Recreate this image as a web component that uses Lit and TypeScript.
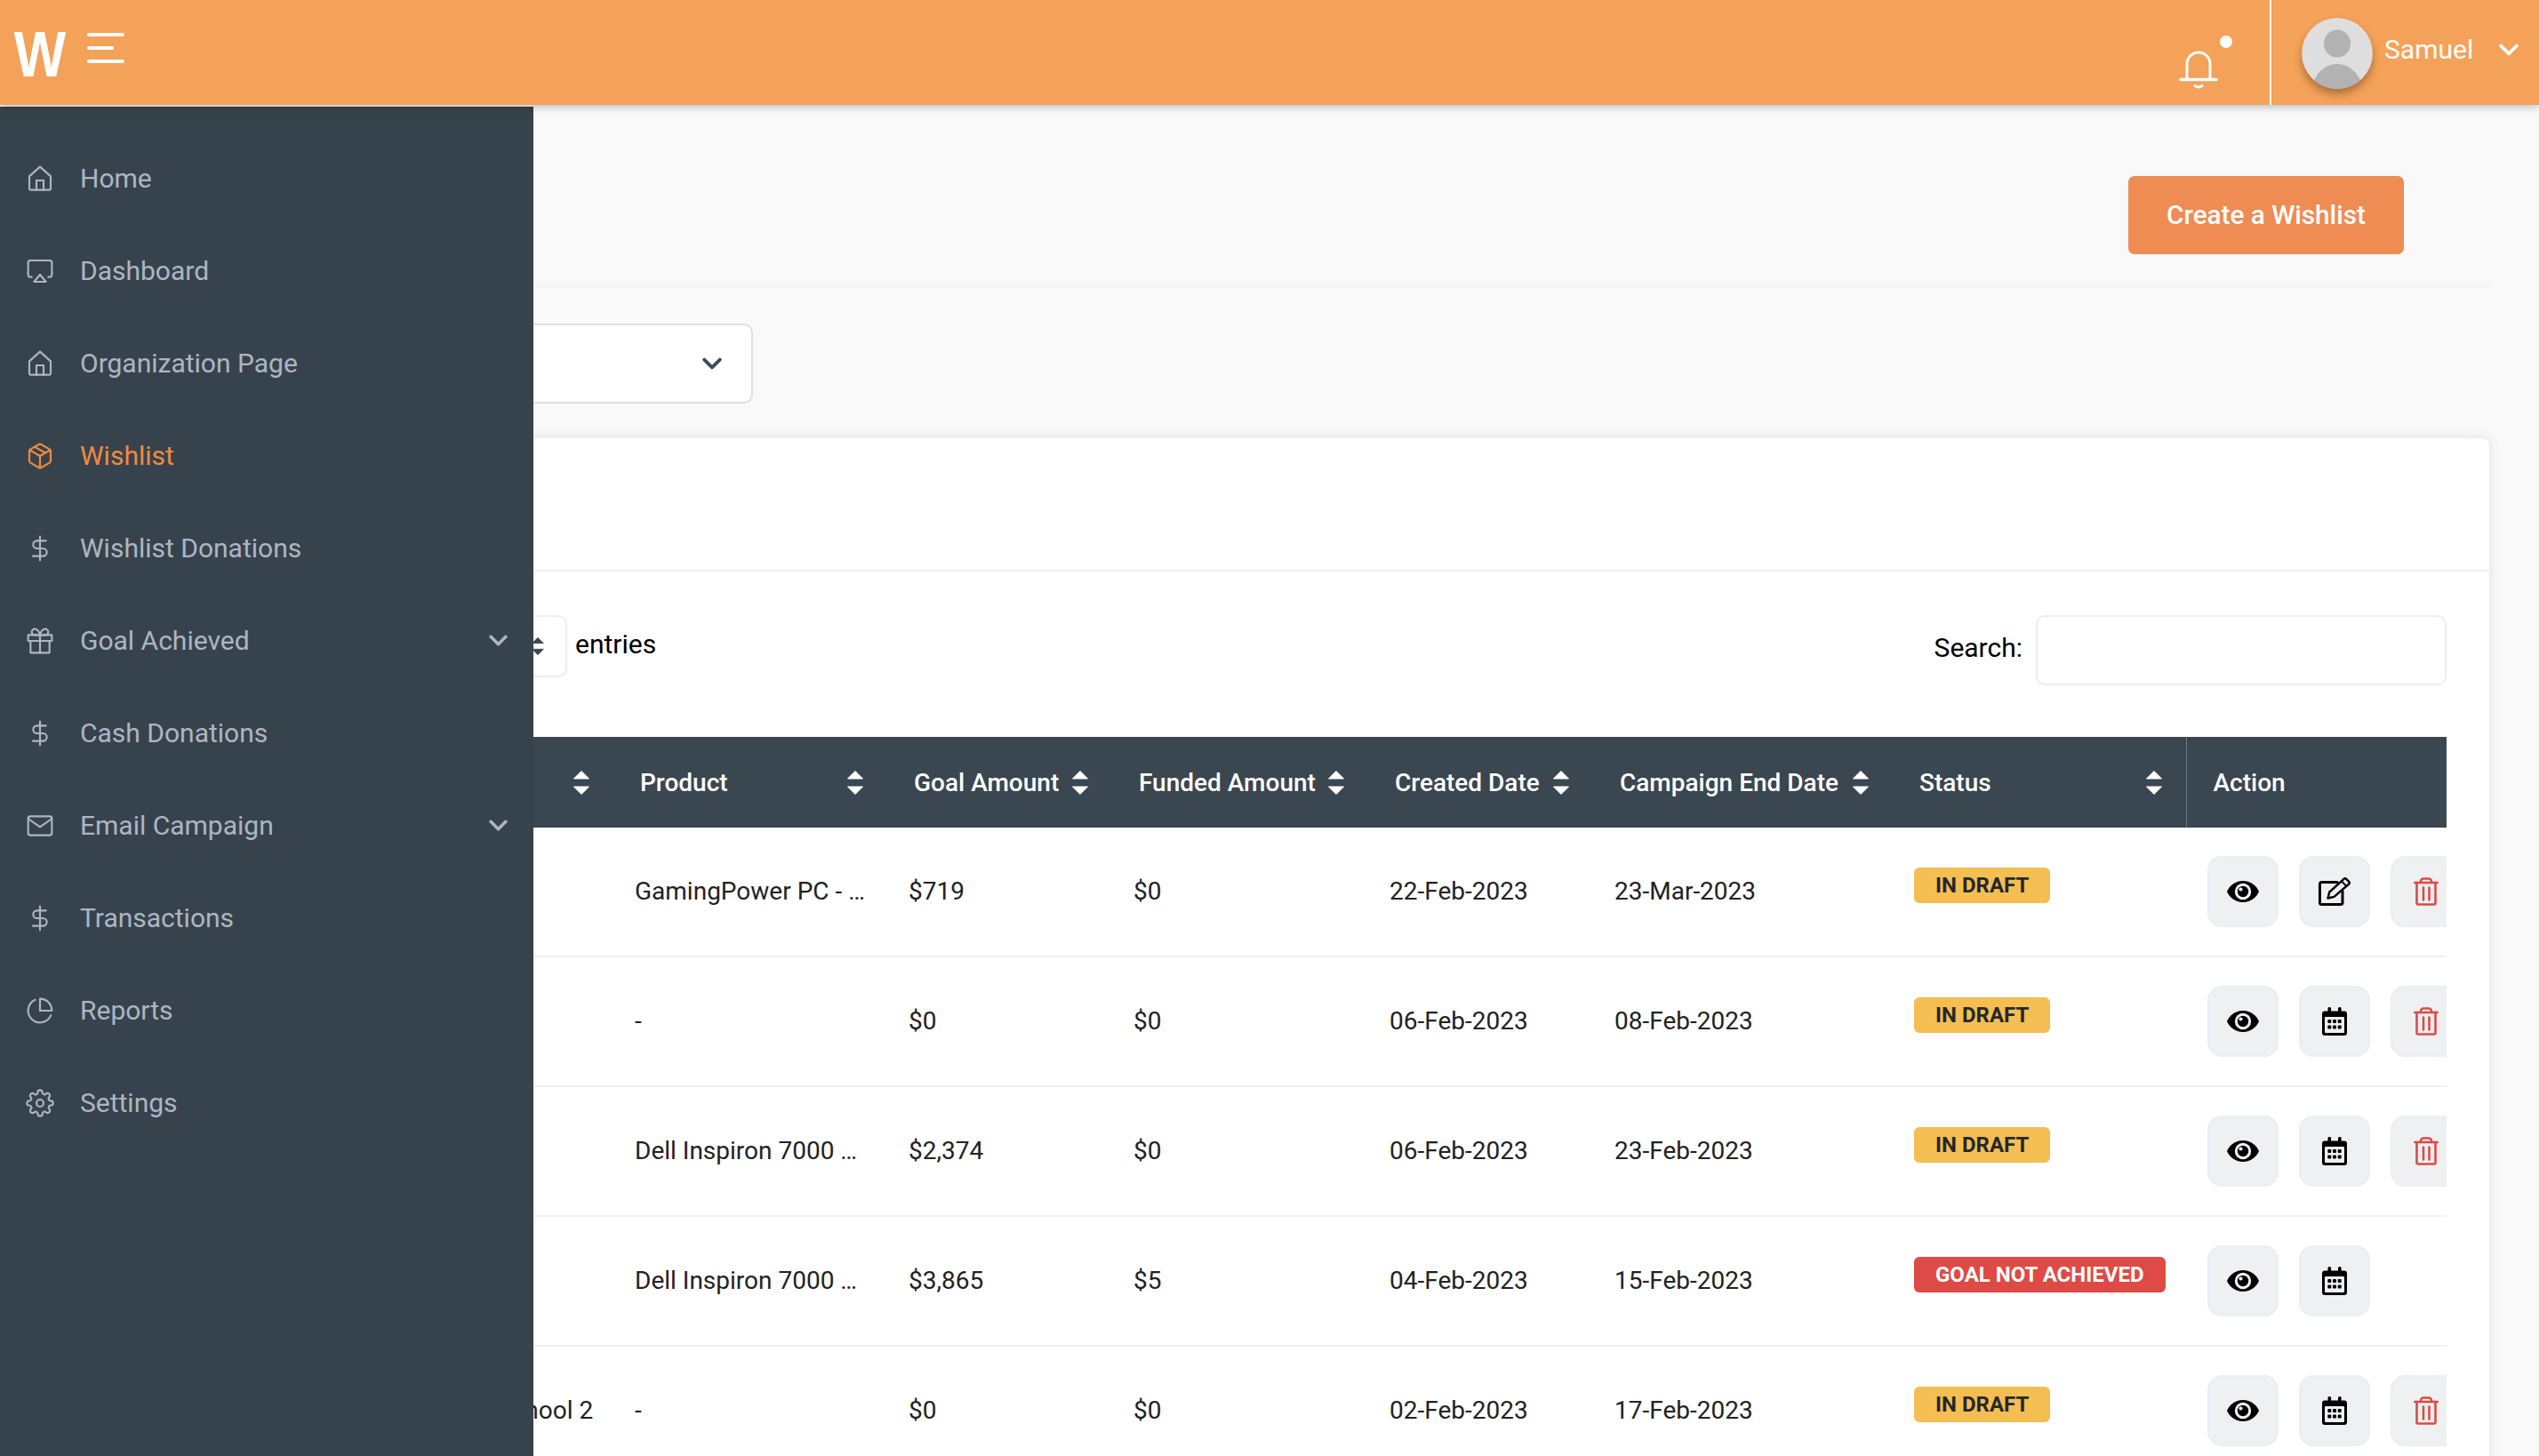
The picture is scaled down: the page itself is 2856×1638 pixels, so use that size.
import { LitElement, html, css, svg } from "lit";
import { customElement } from "lit/decorators.js";

const fi = (body: unknown) => html`<svg class="nav-ic" viewBox="0 0 24 24" fill="none" stroke="currentColor" stroke-width="1.6" stroke-linecap="round" stroke-linejoin="round">${body}</svg>`;
const icons: Record<string, unknown> = {
  home: fi(svg`<path d="M3 10 12 2l9 8v10.500a1 1 0 0 1-1 1H4a1 1 0 0 1-1-1z"/><path d="M9 21.500v-8h6v8"/>`),
  airplay: fi(svg`<path d="M5 17H4a2 2 0 0 1-2-2V5a2 2 0 0 1 2-2h16a2 2 0 0 1 2 2v10a2 2 0 0 1-2 2h-1"/><polygon points="12 15 17 21 7 21 12 15"/>`),
  box: fi(svg`<path d="M7.5 4.21 16.5 9.4"/><path d="M21 16V8a2 2 0 0 0-1-1.73l-7-4a2 2 0 0 0-2 0l-7 4A2 2 0 0 0 3 8v8a2 2 0 0 0 1 1.73l7 4a2 2 0 0 0 2 0l7-4A2 2 0 0 0 21 16z"/><polyline points="3.27 6.96 12 12.01 20.73 6.96"/><line x1="12" y1="22.08" x2="12" y2="12"/>`),
  dollar: fi(svg`<line x1="12" y1="2" x2="12" y2="22"/><path d="M17 5.500H9.500a3.250 3.250 0 0 0 0 6.500h5a3.250 3.250 0 0 1 0 6.500H6"/>`),
  gift: fi(svg`<polyline points="20 12 20 22 4 22 4 12"/><rect x="2" y="7" width="20" height="5"/><line x1="12" y1="22" x2="12" y2="7"/><path d="M12 7H7.5a2.5 2.5 0 0 1 0-5C11 2 12 7 12 7z"/><path d="M12 7h4.5a2.5 2.5 0 0 0 0-5C13 2 12 7 12 7z"/>`),
  mail: fi(svg`<path d="M4 4h16c1.1 0 2 .9 2 2v12c0 1.1-.9 2-2 2H4c-1.1 0-2-.9-2-2V6c0-1.1.9-2 2-2z"/><polyline points="22 6 12 13 2 6"/>`),
  pie: fi(svg`<path d="M21.21 15.89A10 10 0 1 1 8 2.83"/><path d="M22 12A10 10 0 0 0 12 2v10z"/>`),
  gear: fi(svg`<circle cx="12" cy="12" r="3"/><path d="M19.4 15a1.65 1.65 0 0 0 .33 1.82l.06.06a2 2 0 0 1 0 2.83 2 2 0 0 1-2.83 0l-.06-.06a1.65 1.65 0 0 0-1.82-.33 1.65 1.65 0 0 0-1 1.51V21a2 2 0 0 1-2 2 2 2 0 0 1-2-2v-.09A1.65 1.65 0 0 0 9 19.4a1.65 1.65 0 0 0-1.82.33l-.06.06a2 2 0 0 1-2.83 0 2 2 0 0 1 0-2.83l.06-.06a1.65 1.65 0 0 0 .33-1.82 1.65 1.65 0 0 0-1.51-1H3a2 2 0 0 1-2-2 2 2 0 0 1 2-2h.09A1.65 1.65 0 0 0 4.6 9a1.65 1.65 0 0 0-.33-1.82l-.06-.06a2 2 0 0 1 0-2.83 2 2 0 0 1 2.83 0l.06.06a1.65 1.65 0 0 0 1.82.33H9a1.65 1.65 0 0 0 1-1.51V3a2 2 0 0 1 2-2 2 2 0 0 1 2 2v.09a1.65 1.65 0 0 0 1 1.51 1.65 1.65 0 0 0 1.82-.33l.06-.06a2 2 0 0 1 2.83 0 2 2 0 0 1 0 2.83l-.06.06a1.65 1.65 0 0 0-.33 1.82V9a1.65 1.65 0 0 0 1.51 1H21a2 2 0 0 1 2 2 2 2 0 0 1-2 2h-.09a1.65 1.65 0 0 0-1.51 1z"/>`),
};

const nav = [
  ["home", "Home"], ["airplay", "Dashboard"], ["home", "Organization Page"], ["box", "Wishlist", "active"],
  ["dollar", "Wishlist Donations"], ["gift", "Goal Achieved", "sub"], ["dollar", "Cash Donations"],
  ["mail", "Email Campaign", "sub"], ["dollar", "Transactions"], ["pie", "Reports"], ["gear", "Settings"],
];

const chevron = (cls: string) => html`<svg class=${cls} viewBox="0 0 20 12" fill="none" stroke="currentColor" stroke-width="3.400" stroke-linecap="round" stroke-linejoin="round"><polyline points="2 2 10 10 18 2"/></svg>`;
const sort = html`<svg class="sort" viewBox="0 0 18 27"><path d="M9 0.5 17.5 9H0.5z M9 26.5 17.5 18H0.5z" fill="currentColor" stroke="currentColor" stroke-width="1" stroke-linejoin="round"/></svg>`;

const eye = html`<svg class="a-eye" viewBox="0 0 36 24"><path d="M18 0C9 0 2.500 6 0 12c2.500 6 9 12 18 12s15.500-6 18-12C33.500 6 27 0 18 0z" fill="#000"/><circle cx="18" cy="12" r="9.200" fill="#eff0f1"/><circle cx="18" cy="12" r="6.200" fill="#000"/><circle cx="15.500" cy="9.500" r="2.100" fill="#eff0f1"/></svg>`;
const edit = html`<svg class="a-edit" viewBox="0 0 36 32" fill="none" stroke="#000" stroke-width="3" stroke-linejoin="round"><path d="M21 5.500H3.500a2 2 0 0 0-2 2v21a2 2 0 0 0 2 2H25a2 2 0 0 0 2-2V15.500" stroke-linecap="round"/><path d="M10.500 23.500l1.800-7L28.500 1.800a2 2 0 0 1 2.700 0l3 3a2 2 0 0 1 0 2.700L17.500 21.800z" stroke-width="2.400"/><path d="M26 4.500l5.500 5.500" stroke-width="2"/></svg>`;
const cal = html`<svg class="a-cal" viewBox="0 0 28 32"><rect x="6.500" y="0" width="3.600" height="7" rx="1.500" fill="#000"/><rect x="18" y="0" width="3.600" height="7" rx="1.500" fill="#000"/><path d="M3 4.500h22a3 3 0 0 1 3 3V29a3 3 0 0 1-3 3H3a3 3 0 0 1-3-3V7.500a3 3 0 0 1 3-3z" fill="#000"/><rect x="3" y="11" width="22" height="18" rx="1" fill="#eff0f1"/><g fill="#000"><rect x="6.300" y="14" width="4" height="4" rx="1"/><rect x="12" y="14" width="4" height="4" rx="1"/><rect x="17.700" y="14" width="4" height="4" rx="1"/><rect x="6.300" y="20.500" width="4" height="4" rx="1"/><rect x="12" y="20.500" width="4" height="4" rx="1"/><rect x="17.700" y="20.500" width="4" height="4" rx="1"/></g></svg>`;
const trash = html`<svg class="a-trash" viewBox="0 0 28 32" fill="none" stroke="#dd4a45" stroke-width="2.600" stroke-linecap="round" stroke-linejoin="round"><path d="M1.300 6h25.400"/><path d="M8 6V4.500A3 3 0 0 1 11 1.500h6a3 3 0 0 1 3 3V6"/><path d="M3.500 6v23a1.500 1.500 0 0 0 1.500 1.500h18a1.500 1.500 0 0 0 1.500-1.500V6"/><path d="M11 11.500v14M17.500 11.500v14"/></svg>`;

const rows: [string, string, string, string, string, string, string, any, boolean][] = [
  ["", "GamingPower PC - …", "$719", "$0", "22-Feb-2023", "23-Mar-2023", "d", edit, true],
  ["", "-", "$0", "$0", "06-Feb-2023", "08-Feb-2023", "d", cal, true],
  ["", "Dell Inspiron 7000 …", "$2,374", "$0", "06-Feb-2023", "23-Feb-2023", "d", cal, true],
  ["", "Dell Inspiron 7000 …", "$3,865", "$5", "04-Feb-2023", "15-Feb-2023", "n", cal, false],
  ["School 2", "-", "$0", "$0", "02-Feb-2023", "17-Feb-2023", "d", cal, true],
];

@customElement("app-root")
export class AppRoot extends LitElement {
  static styles = css`
    :host { display: block; position: relative; width: 2856px; height: 1638px; overflow: hidden; background: #f9f9f9; font-family: Roboto, "Liberation Sans", sans-serif; color: #222; }
    .top { height: 118px; background: #f4a259; box-shadow: 0 3px 8px rgba(0,0,0,.22); display: flex; align-items: stretch; position: relative; z-index: 3; color: #fff; }
    .logo { font-family: "Liberation Sans", sans-serif; font-weight: 700; font-size: 72px; line-height: 50px; width: 58px; margin: 36px 0 0 16px; height: 50px; display: flex; justify-content: center; transform: scaleX(.86); }
    .burger { margin: 37px 0 0 24px; width: 42px; display: flex; flex-direction: column; gap: 11px; }
    .burger i { display: block; height: 4px; background: #fff; border-radius: 2px; }
    .burger i:nth-child(2) { width: 30px; }
    .spacer { flex: 1; }
    .bell-wrap { position: relative; width: 44px; margin: 56px 58px 0 0; }
    .bell { display: block; width: 44px; height: 44px; }
    .dot { position: absolute; width: 14px; height: 14px; border-radius: 50%; background: #fff; left: 46px; top: -16px; }
    .user { border-left: 2px solid #fff; display: flex; align-items: center; padding-left: 34px; width: 303px; box-sizing: border-box; }
    .avatar { width: 80px; height: 80px; border-radius: 50%; margin-top: 2px; box-shadow: 0 6px 10px rgba(0,0,0,.3); flex: none; }
    .name { font-size: 30px; margin: -6px 0 0 13px; line-height: 36px; }
    .user-chev { width: 22px; height: 14px; margin: -6px 0 0 29px; color: #fff; }

    .side { position: absolute; left: 0; top: 120px; bottom: 0; width: 600px; background: #37434c; z-index: 2; padding-top: 28px; box-sizing: border-box; }
    .item { height: 104px; display: flex; align-items: center; padding: 0 29px; color: #adb5c4; font-size: 30px; }
    .item.active { color: #f08a45; }
    .nav-ic { width: 32px; height: 32px; flex: none; margin-right: 29px; position: relative; top: 1px; }
    .item span { flex: 1; }
    .nav-chev { width: 21px; height: 13px; color: #adb5c4; }

    .main { padding: 0 56px; }
    .head { height: 205px; box-sizing: border-box; border-bottom: 2px solid #f2f2f2; display: flex; justify-content: flex-end; padding: 80px 96px 0 0; }
    .btn { width: 310px; height: 88px; background: #ee8c53; color: #fff; border-radius: 7px; font-size: 29.700px; display: flex; align-items: center; justify-content: center; font-weight: 500; padding-bottom: 2px; box-sizing: border-box; }
    .filter { height: 90px; width: 791px; margin: 41px 0 39px; box-sizing: border-box; border: 2.500px solid #e0e0e0; border-radius: 10px; background: #fff; display: flex; align-items: center; justify-content: flex-end; padding-right: 33px; color: #3f4a52; }
    .filter svg { width: 22px; height: 14px; }
    .card { background: #fff; border-radius: 8px; box-shadow: 0 0 14px rgba(0,0,0,.1); height: 1200px; }
    .card-head { height: 150px; box-sizing: border-box; border-bottom: 2px solid #f0f0f2; }
    .body { padding: 49px 48px 0; }
    .tools { display: flex; justify-content: space-between; height: 79px; margin-bottom: 58px; font-size: 30px; color: #000; }
    .len { display: flex; align-items: flex-start; padding-left: 416px; }
    .len-box { width: 118px; height: 70px; box-sizing: border-box; border: 2px solid #ecedf5; border-radius: 10px; display: flex; align-items: center; justify-content: flex-end; padding-right: 24px; color: #3a4650; }
    .len-box .sort { width: 14px; height: 20px; }
    .len-label { margin-left: 9px; line-height: 66px; }
    .srch { display: flex; align-items: center; gap: 14px; }
    .srch span { margin: -7px 1px 0 0; }
    .srch-box { width: 462px; height: 79px; box-sizing: border-box; border: 2px solid #ecedf5; border-radius: 10px; background: #fff; }
    .tbl { overflow: hidden; }
    table { border-collapse: collapse; table-layout: fixed; width: 2648px; font-size: 28px; }
    th { height: 102px; padding: 0; background: #3a4650; color: #fff; font-weight: 500; font-size: 28px; text-align: left; }
    .th { display: flex; align-items: center; justify-content: space-between; padding: 0 27px 0 30px; }
    th.act { border-left: 1px solid #6b7680; padding-left: 30px; }
    .sort { width: 18px; height: 27px; flex: none; display: block; }
    td { height: 142px; padding: 0 0 2px 24px; border-bottom: 2px solid #f0f0f2; white-space: nowrap; overflow: hidden; color: #222; }
    .badge { display: inline-block; height: 40px; line-height: 40px; border-radius: 6px; padding: 0 24px; font-size: 24px; font-weight: 700; margin-bottom: 12px; background: #f5be52; color: #25282c; }
    .badge.n { background: #de4a45; color: #fff; }
    .acts { display: flex; gap: 23px; padding-top: 2px; }
    .ab { flex: none; width: 80px; height: 80px; box-sizing: border-box; border: 2px solid #ecedf5; border-radius: 16px; background: #eff0f1; display: flex; align-items: center; justify-content: center; }
    .a-eye { width: 36px; height: 24px; }
    .a-edit { width: 36px; height: 32px; }
    .a-cal, .a-trash { width: 28px; height: 32px; }
  `;

  render() {
    const cols = [431, 155, 308, 253, 288, 253, 337, 330, 293];
    const heads = ["", "", "Product", "Goal Amount", "Funded Amount", "Created Date", "Campaign End Date", "Status"];
    return html`
      <div class="top">
        <div class="logo">W</div>
        <div class="burger"><i></i><i></i><i></i></div>
        <div class="spacer"></div>
        <div class="bell-wrap">
          <svg class="bell" viewBox="0 0 44 44" fill="none" stroke="#fff" stroke-width="3" stroke-linecap="round" stroke-linejoin="round"><path d="M9 33V16a13 13 0 0 1 26 0v17"/><path d="M2 33.500h40" stroke-width="3.500"/><path d="M18 40.500c2 2 6 2 8 0"/></svg>
          <span class="dot"></span>
        </div>
        <div class="user">
          <svg class="avatar" viewBox="0 0 80 80"><circle cx="40" cy="40" r="40" fill="#dedede"/><ellipse cx="40" cy="29" rx="15" ry="15.500" fill="#b2b2b2"/><path d="M14 71c3-9 13-19 26-19s23 10 26 19a40 40 0 0 1-52 0z" fill="#b2b2b2"/></svg>
          <span class="name">Samuel</span>
          ${chevron("user-chev")}
        </div>
      </div>
      <nav class="side">
        ${nav.map(([ic, label, kind]) => html`<div class="item ${kind === "active" ? "active" : ""}">${icons[ic]}<span>${label}</span>${kind === "sub" ? chevron("nav-chev") : ""}</div>`)}
      </nav>
      <div class="main">
        <div class="head"><div class="btn">Create a Wishlist</div></div>
        <div class="filter">${chevron("")}</div>
        <div class="card">
          <div class="card-head"></div>
          <div class="body">
            <div class="tools">
              <div class="len"><div class="len-box">${sort}</div><span class="len-label">entries</span></div>
              <div class="srch"><span>Search:</span><div class="srch-box"></div></div>
            </div>
            <div class="tbl">
              <table>
                <colgroup>${cols.map((w) => html`<col style="width:${w}px" />`)}</colgroup>
                <thead><tr>
                  ${heads.map((h) => html`<th><div class="th"><span>${h}</span>${sort}</div></th>`)}
                  <th class="act">Action</th>
                </tr></thead>
                <tbody>
                  ${rows.map((r) => html`<tr>
                    <td></td>
                    <td>${r[0]}</td>
                    <td>${r[1]}</td>
                    <td>${r[2]}</td>
                    <td>${r[3]}</td>
                    <td>${r[4]}</td>
                    <td>${r[5]}</td>
                    <td><span class="badge ${r[6]}">${r[6] === "d" ? "IN DRAFT" : "GOAL NOT ACHIEVED"}</span></td>
                    <td><div class="acts"><div class="ab">${eye}</div><div class="ab">${r[7]}</div>${r[8] ? html`<div class="ab">${trash}</div>` : ""}</div></td>
                  </tr>`)}
                </tbody>
              </table>
            </div>
          </div>
        </div>
      </div>
    `;
  }
}
